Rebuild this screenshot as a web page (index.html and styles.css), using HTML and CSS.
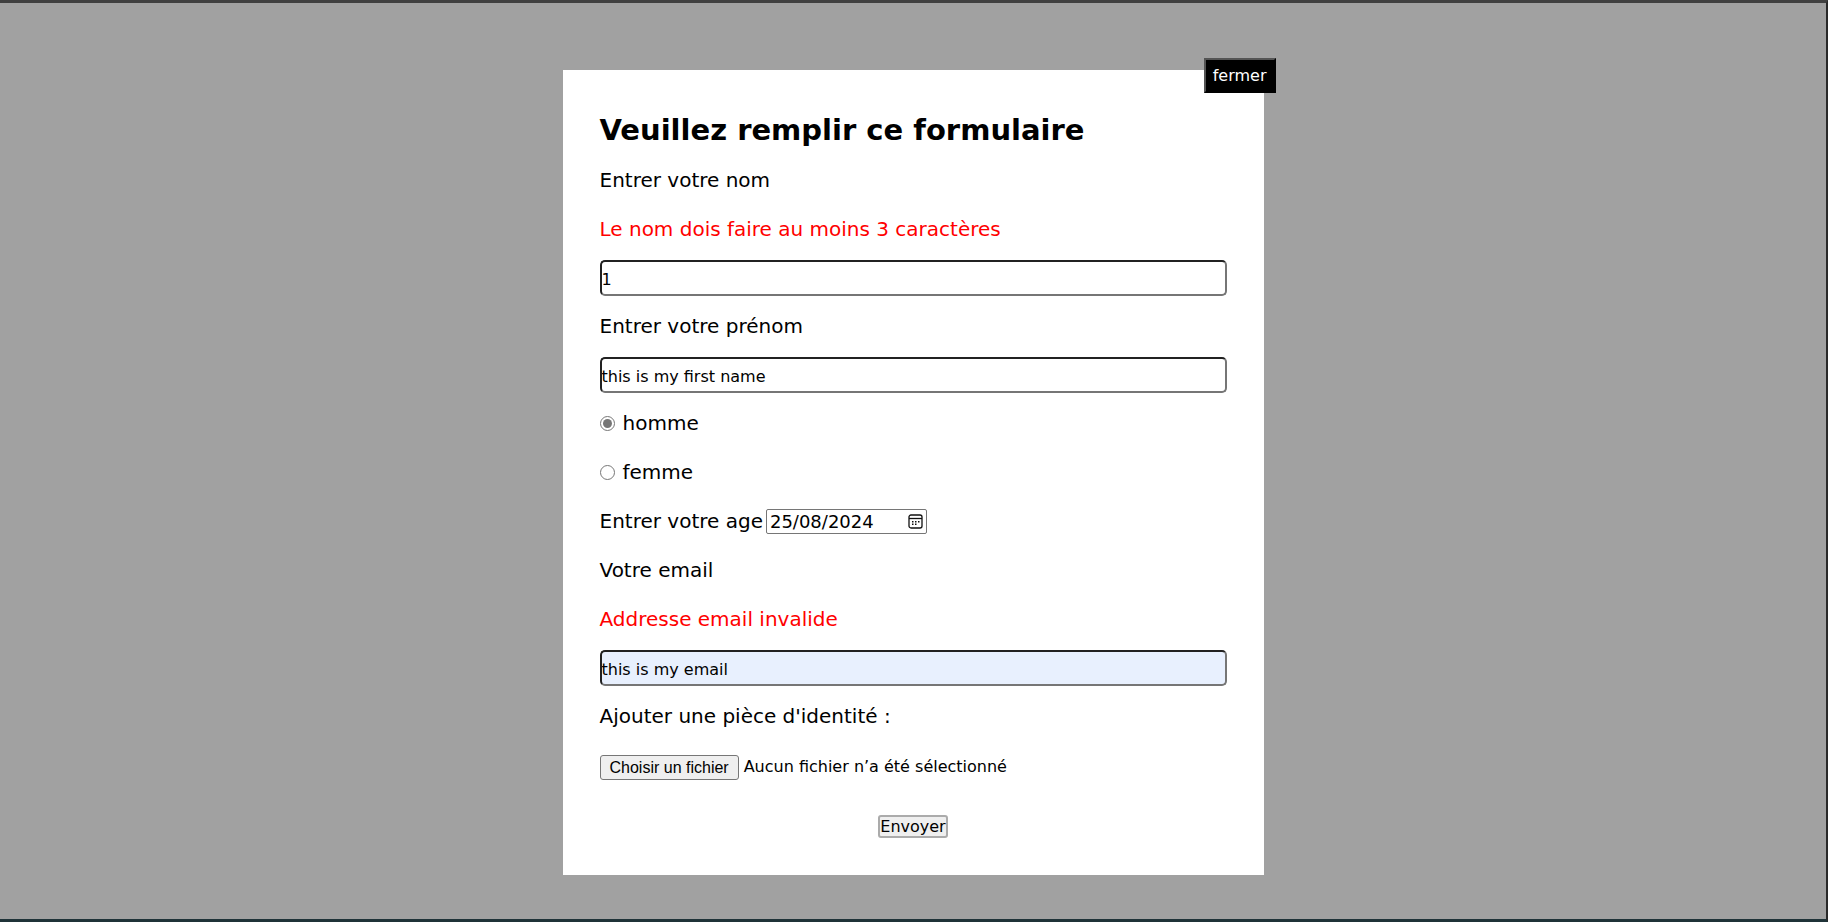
FILE: index.html
```
<!DOCTYPE html>
<html lang="fr">
<head>
<meta charset="utf-8">
<meta name="viewport" content="width=device-width, initial-scale=1">
<title>Formulaire</title>
<link rel="stylesheet" href="styles.css">
</head>
<body class="page">
<main class="modal">
  <button class="close" type="button">fermer</button>
  <h1 class="title">Veuillez remplir ce formulaire</h1>
  <form class="form" novalidate>
    <div class="field">
      <label for="nom">Entrer votre nom</label>
      <p class="error">Le nom dois faire au moins 3 caractères</p>
      <input class="text-input" id="nom" type="text" value="1">
    </div>
    <div class="field">
      <label for="prenom">Entrer votre prénom</label>
      <input class="text-input" id="prenom" type="text" value="this is my first name">
    </div>
    <div class="field">
      <div class="row"><input class="radio" id="homme" type="radio" name="genre" checked><label for="homme">homme</label></div>
      <div class="row"><input class="radio" id="femme" type="radio" name="genre"><label for="femme">femme</label></div>
    </div>
    <div class="row date-row">
      <label for="age">Entrer votre age</label>
      <div class="date">
        <input class="date-input" id="age" type="text" value="25/08/2024">
        <svg class="date-icon" viewBox="0 0 15 15" width="15" height="15" aria-hidden="true">
          <rect x="1" y="1" width="13" height="13" rx="2" fill="none" stroke="#111" stroke-width="1.3"/>
          <path d="M1 4.5h13" stroke="#111" stroke-width="1.3"/>
          <path d="M4 7h1.500v1.500H4zM7 7h1.500v1.500H7zM10 7h1.500v1.500H10zM4 9.500h1.500V11H4zM7 9.500h1.500V11H7z" fill="#111"/>
        </svg>
      </div>
    </div>
    <div class="field">
      <label for="email">Votre email</label>
      <p class="error">Addresse email invalide</p>
      <input class="text-input filled" id="email" type="email" value="this is my email">
    </div>
    <div class="field">
      <label for="piece">Ajouter une pièce d'identité :</label>
      <div class="row file">
        <input class="file-input" id="piece" type="file">
        <label class="file-button" for="piece">Choisir un fichier</label>
        <span class="file-name">Aucun fichier n’a été sélectionné</span>
      </div>
    </div>
    <button class="submit" type="submit">Envoyer</button>
  </form>
</main>
</body>
</html>
```
FILE: styles.css
```
* {
  box-sizing: border-box;
}

.page {
  margin: 0;
  min-height: 100vh;
  display: flex;
  justify-content: center;
  align-items: flex-start;
  padding: 67px 0 42px;
  border-top: 3px solid #404040;
  border-right: 2px solid #292929;
  border-bottom: 3px solid #1f3338;
  background: #a1a1a1;
  color: #000;
  font: 20px/36px Verdana, "DejaVu Sans", sans-serif;
}

.modal {
  position: relative;
  width: 100%;
  max-width: 701px;
  padding: 37px;
  background: #fff;
}

.close {
  position: absolute;
  top: -12px;
  right: -12px;
  padding: 6px 7px;
  border: 2px outset #000;
  background: #000;
  color: #fff;
  font: inherit;
  font-size: 16px;
  line-height: 19px;
}

.title {
  margin: 0 0 8px;
  font-size: 29px;
  line-height: 47px;
}

.form {
  display: flex;
  flex-direction: column;
  gap: 12px;
}

.field {
  display: flex;
  flex-direction: column;
  gap: 13px;
}

.error {
  margin: 0;
  color: #f00;
}

.text-input {
  width: 100%;
  height: 36px;
  padding: 3px 0 0;
  border: 2px inset #767676;
  border-radius: 5px;
  background: #fff;
  color: #000;
  font: inherit;
  font-size: 16px;
}

.filled {
  background: #e8f0fe;
}

.row {
  display: flex;
  align-items: center;
  min-height: 36px;
}

.radio {
  width: 15px;
  height: 15px;
  margin: 0 8px 0 0;
  accent-color: #767676;
}

.date-row {
  gap: 3px;
  min-height: 38px;
}

.date {
  position: relative;
  display: flex;
}

.date-input {
  width: 161px;
  height: 25px;
  padding: 0 24px 0 3px;
  border: 1px solid #767676;
  border-radius: 2px;
  background: #fff;
  color: #000;
  font: inherit;
  font-size: 18px;
  line-height: 23px;
}

.date-icon {
  position: absolute;
  top: 5px;
  right: 4px;
}

.file {
  position: relative;
  min-height: 40px;
}

.file-input {
  position: absolute;
  width: 1px;
  height: 1px;
  opacity: 0;
}

.file-button {
  padding: 0 9px;
  border: 1px solid #767676;
  border-radius: 3px;
  background: #efefef;
  font: 16px/23px Arial, "Liberation Sans", sans-serif;
}

.file-name {
  margin-left: 5px;
  font-size: 16px;
}

.submit {
  align-self: center;
  margin-top: 16px;
  padding: 0;
  border: 2px solid #ababab;
  border-radius: 3px;
  background: #efefef;
  color: #000;
  font: inherit;
  font-size: 16px;
  line-height: 19px;
}
```
